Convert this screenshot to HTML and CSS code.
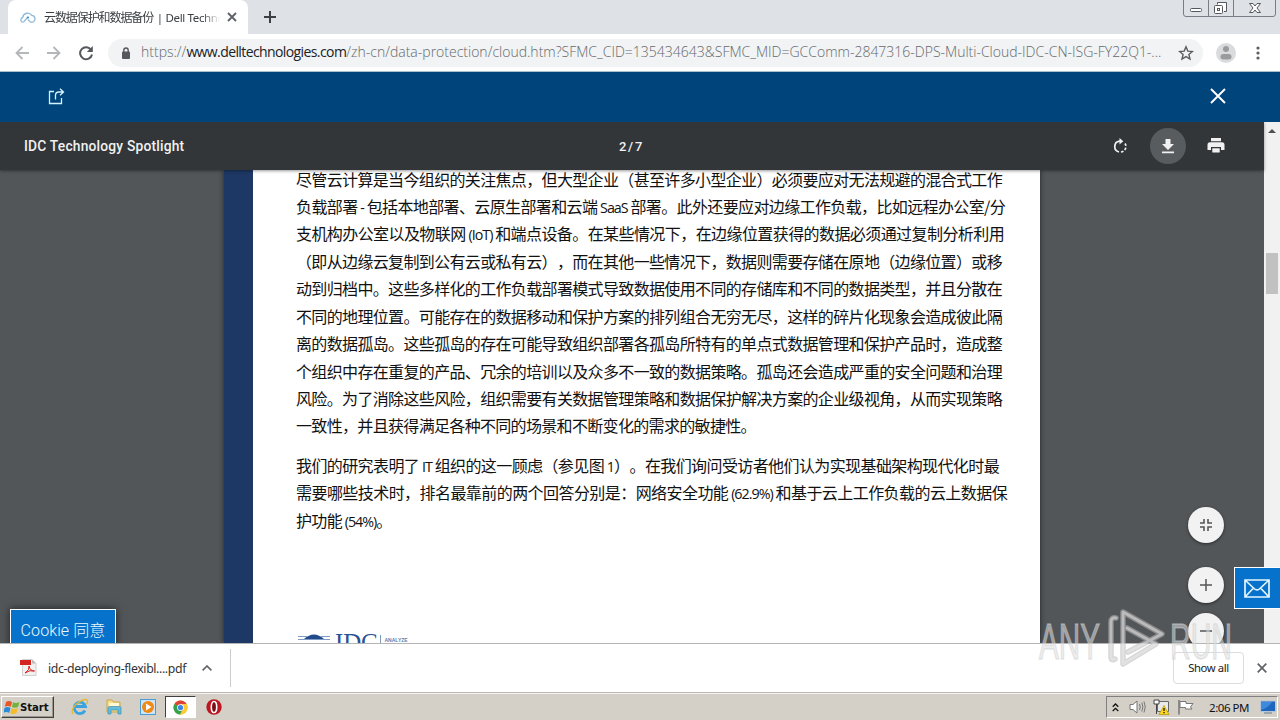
FILE: index.html
```html
<!DOCTYPE html>
<html lang="zh-CN">
<head>
<meta charset="utf-8">
<title>云数据保护和数据备份 | Dell Technologies</title>
<link rel="stylesheet" href="styles.css">
</head>
<body>
<div class="screen">
  <header class="tabs">
    <div class="tab">
      <svg class="fav" width="16" height="13" viewBox="0 0 16 13" fill="none" stroke="#8fb9d9" stroke-width="1.3"><path d="M3.5 11.2H2.8A2.4 2.4 0 0 1 2.7 6.500A5 5 0 0 1 11.800 4.300A3.600 3.600 0 0 1 12.800 11.200H10.500L7.800 8.400"/><path d="M3.500 11.200L7.800 6"/><circle cx="8" cy="6.500" r="1" fill="#2d87c8" stroke="none"/></svg>
      <span class="tab-title"><span class="cn">云数据保护和数据备份</span> | Dell Techno</span>
      <svg class="tab-x" width="10" height="10" viewBox="0 0 10 10" stroke="#5f6368" stroke-width="1.900"><path d="M1 1L9 9M9 1L1 9"/></svg>
    </div>
    <svg class="new-tab" width="12" height="12" viewBox="0 0 12 12" stroke="#3c4043" stroke-width="2"><path d="M6 0V12M0 6H12"/></svg>
    <svg class="win" width="94" height="18" viewBox="0 0 94 18" fill="none" stroke="#7a7d86"><path d="M.5 0V14Q.5 16.500 3 16.500H90Q92.500 16.500 92.500 14V0M25.500 0V16M50.500 0V16"/><g stroke="#55575e"><rect x="7.500" y="8.500" width="11" height="3" rx="1" fill="#fff"/><path d="M34.500 4.500V2.500H43.500V11.500H41" fill="#fff"/><rect x="31.500" y="5.500" width="8" height="8" rx="1" fill="#fff"/><rect x="34.500" y="8.500" width="2" height="2"/><path d="M66.500 3.500H70L72 6L74 3.500H77.500L74 8L77.500 12.500H74L72 10L70 12.500H66.500L70 8Z" fill="#fff"/></g></svg>
  </header>
  <div class="nav">
    <svg width="14" height="14" viewBox="0 0 14 14" fill="none" stroke="#b4b6b9" stroke-width="1.800"><path d="M14 7H1.500M7.500 1L1.500 7L7.500 13"/></svg>
    <svg width="14" height="14" viewBox="0 0 14 14" fill="none" stroke="#b4b6b9" stroke-width="1.800"><path d="M0 7H12.500M6.500 1L12.500 7L6.500 13"/></svg>
    <svg class="reload" width="16" height="16" viewBox="0 0 16 16"><path d="M13.200 5A6 6 0 1 0 14 9.500" fill="none" stroke="#55585c" stroke-width="2"/><path d="M14.800 1V7H8.800Z" fill="#55585c"/></svg>
    <div class="omni">
      <svg width="10" height="12" viewBox="0 0 10 12"><rect x="1" y="4.500" width="8" height="7.500" rx="1" fill="#55585c"/><path d="M2.800 5V3.200A2.200 2.200 0 0 1 7.200 3.200V5" fill="none" stroke="#55585c" stroke-width="1.400"/></svg>
      <span class="url"><span class="u1">https://</span><span class="u2">www.delltechnologies.com</span><span class="u3">/zh-cn/data-protection/cloud.htm?SFMC_CID=135434643&amp;SFMC_MID=GCComm-2847316-DPS-Multi-Cloud-IDC-CN-ISG-FY22Q1-...</span></span>
      <svg width="16" height="16" viewBox="0 0 16 16" fill="none" stroke="#5a5d61" stroke-width="1.400"><path d="M8 1.800L9.800 6.100L14.400 6.500L10.900 9.500L12 14.100L8 11.600L4 14.100L5.100 9.500L1.600 6.500L6.200 6.100Z"/></svg>
    </div>
    <svg class="user" width="20" height="20" viewBox="0 0 20 20"><circle cx="10" cy="10" r="10" fill="#dadbdd"/><circle cx="10" cy="6" r="3" fill="#9a9b9d"/><rect x="4.500" y="11" width="11" height="5.500" rx="3" fill="#9a9b9d"/></svg>
    <svg class="dots" width="4" height="14" viewBox="0 0 4 14" fill="#5a5d61"><circle cx="2" cy="2" r="1.600"/><circle cx="2" cy="7" r="1.600"/><circle cx="2" cy="12" r="1.600"/></svg>
  </div>
  <div class="modal-bar">
    <svg width="17" height="17" viewBox="0 0 17 17" fill="none" stroke="#d5f2fb" stroke-width="1.300"><path d="M6 3.500H1.500V15.500H13.500V10M7.500 11.500V7.500Q7.500 4 11 4H15.500M12 .8L15.500 4L12 7.200"/></svg>
    <svg width="16" height="16" viewBox="0 0 16 16" stroke="#fff" stroke-width="1.900"><path d="M1 1L15 15M15 1L1 15"/></svg>
  </div>
  <main class="viewer">
    <section class="pdf">
      <div class="pdf-bar">
        <span class="doc-title">IDC Technology Spotlight</span>
        <span class="pages">2 / 7</span>
        <div class="pdf-tools">
          <svg width="16" height="16" viewBox="0 0 16 16" fill="none" stroke="#f1f1f1" stroke-width="1.700"><path d="M7 14A5.500 5.500 0 0 1 7.500 3.200H9"/><path d="M9 14A5.500 5.500 0 0 0 13 5.500" stroke-dasharray="2.600 1.700"/><path d="M7.500 0L11.300 3.300L7.500 6.600Z" fill="#f1f1f1" stroke="none"/></svg>
          <span class="dl"><svg width="14" height="16" viewBox="0 0 14 16" fill="#f1f1f1"><path d="M4.500 1H9.500V6H13L7 12L1 6H4.500ZM1 13.500H13V15.200H1Z"/></svg></span>
          <svg width="18" height="16" viewBox="0 0 18 16" fill="#f1f1f1"><path d="M4 0H14V3.300H4ZM3 4.300H15Q17.500 4.300 17.500 7V12H14V9H4V12H.5V7Q.5 4.300 3 4.300ZM5.300 10.200H12.700V14.600H5.300Z"/></svg>
        </div>
      </div>
      <div class="canvas">
        <article class="page">
          <div class="copy">
            <p class="ln">尽管云计算是当今组织的关注焦点，但大型企业（甚至许多小型企业）必须要应对无法规避的混合式工作</p>
            <p class="ln w2">负载部署<span class="lat"> - </span>包括本地部署、云原生部署和云端<span class="lat"> SaaS </span>部署。此外还要应对边缘工作负载，比如远程办公室/分</p>
            <p class="ln w3">支机构办公室以及物联网<span class="lat"> (IoT) </span>和端点设备。在某些情况下，在边缘位置获得的数据必须通过复制分析利用</p>
            <p class="ln">（即从边缘云复制到公有云或私有云），而在其他一些情况下，数据则需要存储在原地（边缘位置）或移</p>
            <p class="ln">动到归档中。这些多样化的工作负载部署模式导致数据使用不同的存储库和不同的数据类型，并且分散在</p>
            <p class="ln">不同的地理位置。可能存在的数据移动和保护方案的排列组合无穷无尽，这样的碎片化现象会造成彼此隔</p>
            <p class="ln">离的数据孤岛。这些孤岛的存在可能导致组织部署各孤岛所特有的单点式数据管理和保护产品时，造成整</p>
            <p class="ln">个组织中存在重复的产品、冗余的培训以及众多不一致的数据策略。孤岛还会造成严重的安全问题和治理</p>
            <p class="ln">风险。为了消除这些风险，组织需要有关数据管理策略和数据保护解决方案的企业级视角，从而实现策略</p>
            <p class="ln end">一致性，并且获得满足各种不同的场景和不断变化的需求的敏捷性。</p>
            <p class="ln gap w4">我们的研究表明了<span class="lat"> IT </span>组织的这一顾虑（参见图<span class="lat"> 1</span>）。在我们询问受访者他们认为实现基础架构现代化时最</p>
            <p class="ln w5">需要哪些技术时，排名最靠前的两个回答分别是：网络安全功能<span class="lat"> (62.9%) </span>和基于云上工作负载的云上数据保</p>
            <p class="ln end">护功能<span class="lat"> (54%)</span>。</p>
          </div>
          <div class="idc">
            <svg width="32" height="12" viewBox="0 0 32 12" stroke="#7f9cc6"><path d="M6 5Q16-4 26 5Z" fill="#234b8c" stroke="none"/><path d="M0 2.500H10M22 2.500H32M0 5.500H32" fill="none" stroke-width="1"/></svg>
            <span class="idc-name">IDC</span><span class="idc-tag">ANALYZE</span>
          </div>
        </article>
        <span class="cookie">Cookie 同意</span>
        <div class="zooms">
          <span class="fab fit"><svg width="12" height="12" viewBox="0 0 12 12" fill="none" stroke="#555" stroke-width="1.600"><path d="M0 4H4V0M8 0V4H12M0 8H4V12M12 8H8V12"/></svg></span>
          <span class="fab plus"><svg width="12" height="12" viewBox="0 0 12 12" stroke="#555" stroke-width="1.500"><path d="M6 0V12M0 6H12"/></svg></span>
          <span class="fab"><svg width="12" height="12" viewBox="0 0 12 12" stroke="#555" stroke-width="1.500"><path d="M0 6H12"/></svg></span>
        </div>
      </div>
    </section>
    <aside class="scroll"><i class="up"></i><i class="thumb"></i></aside>
    <span class="mail"><svg width="26" height="19" viewBox="0 0 26 19" fill="none" stroke="#e3f6ff" stroke-width="1.700"><path d="M1 1H25V18H1ZM1 1L10 9.500Q13 12.500 16 9.500L25 1M1 18L9.500 9M25 18L16.500 9"/></svg></span>
  </main>
  <div class="downloads">
    <svg width="17" height="17" viewBox="0 0 17 17"><path d="M2.500 .5H12L16 4.500V16.500H2.500Z" fill="#f1f1f1" stroke="#d0d0d0"/><path d="M12 .5V4.500H16Z" fill="#b9b9b9"/><rect y="1" width="11" height="5" fill="#d5231f"/><path d="M5 14Q10 11 9 7Q10 12 14.500 12Q10 10.500 5 14Z" fill="none" stroke="#d5231f"/></svg>
    <span class="fname">idc-deploying-flexibl....pdf</span>
    <svg class="chev" width="10" height="6" viewBox="0 0 10 6" fill="none" stroke="#5f6368" stroke-width="1.600"><path d="M.6 5.400L5 1L9.400 5.400"/></svg>
    <i class="sep"></i>
    <span class="show">Show all</span>
    <svg width="10" height="10" viewBox="0 0 10 10" stroke="#5f6368" stroke-width="1.700"><path d="M.7 .7L9.300 9.300M9.300 .7L.7 9.300"/></svg>
  </div>
  <footer class="taskbar">
    <span class="start"><svg width="16" height="15" viewBox="0 0 16 15"><path d="M2 2Q5 0 8 2L6.800 6.800Q4 5 .8 6.800Z" fill="#e8562a"/><path d="M9 2.300Q12 4 15.500 2L14 7Q11 8.500 7.800 7Z" fill="#72b43b"/><path d="M.5 8Q3.500 6.200 6.500 8L5.200 13Q2.500 11 -.8 13Z" fill="#2b8bd8"/><path d="M7.500 8.300Q10.500 10 13.800 8L12.500 13Q9.500 15 6.300 13.200Z" fill="#f5bb28"/></svg>Start</span>
    <div class="quick">
      <svg width="18" height="18" viewBox="0 0 18 18" fill="none"><path d="M14 12.500A5.700 5.700 0 1 1 14.500 8.500H4" stroke="#38a3df" stroke-width="2.800"/><path d="M2 16Q-1 12 6 5.500Q14-.5 16.500 2.500Q17 4 15.500 6" stroke="#e3b839" stroke-width="1.300"/></svg>
      <svg width="18" height="18" viewBox="0 0 18 18"><path d="M2 2H7L8.500 4H15V14H2Z" fill="#f6dc86" stroke="#c9a743"/><path d="M4 5H14V9H4Z" fill="#fff8d7"/><path d="M3 16V10Q3 8.500 4.500 8.500H14.500Q16 8.500 16 10V16H13V12H6V16Z" fill="#65bcd9" stroke="#3d8fb6" stroke-width=".7"/></svg>
      <svg width="18" height="18" viewBox="0 0 18 18"><rect x="1.500" y="1.500" width="15" height="15" fill="#cce6f7" stroke="#4c9bd4"/><circle cx="9" cy="9" r="6" fill="#f08a14"/><path d="M7 5.500L12.500 9L7 12.500Z" fill="#fff"/></svg>
      <span class="active"><svg width="15" height="15" viewBox="0 0 16 16"><circle cx="8" cy="8" r="7.500" fill="#e1a927"/><path d="M8 8L1.500 4.300A7.500 7.500 0 0 1 14.500 4.300Z" fill="#dd4439"/><path d="M8 8L1.500 4.300A7.500 7.500 0 0 0 7.500 15.500L10 10Z" fill="#31a350"/><path d="M8 4.300H14.600A7.500 7.500 0 0 1 7.500 15.500L11 10Z" fill="#fbcc34"/><circle cx="8" cy="8" r="3.600" fill="#fff"/><circle cx="8" cy="8" r="2.800" fill="#3f82e8"/></svg></span>
      <svg width="16" height="16" viewBox="0 0 16 16"><circle cx="8" cy="8" r="7.700" fill="#bd1622"/><ellipse cx="8" cy="8" rx="2.700" ry="5.500" fill="#7d0b13" stroke="#fff" stroke-width="1.600"/></svg>
    </div>
    <div class="tray">
      <svg width="7" height="9" viewBox="0 0 7 9" fill="none" stroke="#111" stroke-width="1.300"><path d="M.7 3.700L3.500 1L6.300 3.700M.7 8L3.500 5.300L6.300 8"/></svg>
      <svg class="t1" width="17" height="16" viewBox="0 0 17 16" fill="none" stroke="#777"><path d="M1 5.500H4L8 2V14L4 10.500H1Z" fill="#fff"/><path d="M10.500 5Q12 8 10.500 11M12.800 3.500Q15 8 12.800 12.500M15 2.500Q17.500 8 15 13.500"/></svg>
      <svg class="t2" width="17" height="16" viewBox="0 0 17 16"><path d="M4.500 2.500H15.500V12.500H4.500Z" fill="#e9e9e9" stroke="#666"/><path d="M1 1V5H6V1ZM3.500 5V15" fill="#fff" stroke="#444"/><path d="M11 6.500L16 15.500H6Z" fill="#ffd91c" stroke="#b59500" stroke-width=".7"/><path d="M11 9V12M11 13V14.200" stroke="#111" stroke-width="1.300"/></svg>
      <svg class="t3" width="17" height="16" viewBox="0 0 17 16"><path d="M2 1V15.500" stroke="#666" stroke-width="1.300"/><path d="M3 2.500H9V4.500H16L13.500 8L15 10H8.500V8.500H3Z" fill="#fff" stroke="#777"/></svg>
      <span class="time">2:06 PM</span>
      <svg width="16" height="14" viewBox="0 0 16 14"><rect x=".5" y="1" width="15" height="10.500" fill="#1e66bd" stroke="#b8c6d6"/><path d="M1 10Q8 8 12 2H1Z" fill="#3c8add"/><path d="M4 13H12" stroke="#8897a6" stroke-width="1.500"/></svg>
    </div>
  </footer>
  <svg class="mark" width="200" height="66" viewBox="0 0 200 66">
    <g fill="#dedede" fill-opacity=".55" stroke="#cfcfcf" stroke-opacity=".5" stroke-width="1.500" font-family="Liberation Sans, sans-serif" font-size="50"><text x="2" y="51" textLength="61" lengthAdjust="spacingAndGlyphs">ANY</text><text x="133" y="51" textLength="62" lengthAdjust="spacingAndGlyphs">RUN</text></g>
    <g fill="none" stroke-linejoin="round" stroke-linecap="round"><path d="M79 10Q74 9 74 14V49Q74 53 78 51M90 20L119 36L86 56V4L125 26L91 44" stroke="#b4b4b4" stroke-opacity=".55" stroke-width="5.500"/><path d="M79 10Q74 9 74 14V49Q74 53 78 51M90 20L119 36L86 56V4L125 26L91 44" stroke="#eee" stroke-opacity=".5" stroke-width="3"/></g>
  </svg>
</div>
</body>
</html>
```
FILE: styles.css
```css
* { box-sizing: border-box; }
body { margin: 0; font-family: "Noto Sans", "Noto Sans CJK SC", sans-serif; }
svg { display: block; flex: none; }
.screen { position: relative; width: 1280px; height: 720px; overflow: hidden; display: flex; flex-direction: column; }
.tabs { height: 34px; background: #dee1e6; display: flex; align-items: center; padding-left: 8px; flex: none; }
.tab { width: 240px; height: 34px; background: #fff; border-radius: 8px 8px 0 0; display: flex; align-items: center; padding: 0 11px 0 12px; }
.tab-title { margin-left: 8px; width: 176px; margin-right: 7px; font-size: 11.5px; letter-spacing: -0.35px; color: #3c4043; white-space: nowrap; mask-image: linear-gradient(90deg, #000 90%, transparent); }
.cn { font-size: 12px; letter-spacing: -1.08px; margin-right: 1px; }
.new-tab { margin-left: 16px; }
.win { margin-left: auto; margin-right: 3px; align-self: flex-start; }
.nav { height: 38px; flex: none; display: flex; align-items: center; padding-left: 15px; border-bottom: 1px solid #a9c0cf; background: #fff; }
.nav > svg + svg { margin-left: 18px; }
.nav > svg.reload { margin-left: 17px; }
.omni { margin-left: 14px; width: 1095px; height: 28px; border-radius: 14px; background: #f1f3f4; display: flex; align-items: center; padding-left: 13px; }
.url { margin-left: 10px; width: 1024px; margin-right: 13px; font-size: 14px; line-height: 20px; padding-bottom: 1px; white-space: nowrap; font-family: "Open Sans", "Noto Sans", sans-serif; font-weight: 300; display: flex; color: #66696d; }
.u2 { color: #202124; font-weight: 400; letter-spacing: -.6px; }
.user { margin-left: 13px; }
.nav > svg.dots { margin-left: 20px; }
.modal-bar { height: 50px; flex: none; background: #00447c; display: flex; align-items: center; justify-content: space-between; padding: 0 54px 2px 48px; }
.viewer { position: relative; height: 521px; flex: none; display: flex; overflow: hidden; }
.pdf { width: 1264px; display: flex; flex-direction: column; }
.pdf-bar { position: relative; z-index: 2; height: 48px; flex: none; background: #323639; color: #f1f1f1; display: grid; grid-template-columns: 619px 1fr auto; align-items: center; padding: 0 39px 0 24px; font: 500 13.8px Roboto, sans-serif; box-shadow: 0 1px 3px rgba(0,0,0,.4); }
.doc-title { letter-spacing: .2px; }
.pages { margin-left: -24px; font-size: 13px; word-spacing: -1.5px; }
.pdf-tools { display: flex; align-items: center; gap: 21px; }
.pdf-tools > svg:first-child { margin-right: 1px; }
.dl { width: 36px; height: 36px; border-radius: 50%; background: #595c5f; display: grid; place-items: center; }
.canvas { position: relative; flex: 1; background: #525659; padding-left: 224px; overflow: hidden; }
.page { width: 816px; height: 473px; background: #fff; border-left: 29px solid #1d3864; box-shadow: 0 0 5px rgba(0,0,0,.6); overflow: hidden; padding-left: 43px; }
.copy { margin-top: -4.5px; }
.ln { margin: 0; width: 706px; height: 27.45px; line-height: 27.45px; font-size: 16px; letter-spacing: -.67px; font-family: "Noto Sans CJK SC", sans-serif; color: #111; white-space: nowrap; text-align: justify; text-align-last: justify; text-spacing-trim: space-all; }
.ln.w2 { width: 709px; }
.ln.w3 { width: 708px; }
.ln.w4 { width: 703px; }
.ln.w5 { width: 711px; }
.ln.end { text-align-last: left; }
.ln.gap { margin-top: 12px; }
.lat { font-family: "Open Sans", sans-serif; font-size: 14.3px; letter-spacing: -1px; white-space: pre; }
.idc { display: flex; align-items: flex-start; margin: 99.500px 0 0 2px; color: #2a5191; }
.idc-name { font: 25px/24px "Liberation Serif", serif; margin: -3px 0 0 5px; letter-spacing: -.2px; }
.idc-tag { border-left: 1px solid #7f9ac0; margin: 1px 0 0 3px; padding-left: 3px; font: 700 5px/10px "Liberation Sans", sans-serif; color: #5b7fb4; height: 20px; }
.cookie { position: absolute; left: 10px; top: 439px; width: 106px; height: 42px; border: 1px solid #fff; background: #0672cb; color: #e8faff; font: 300 16px/42px Roboto, "Noto Sans CJK SC", sans-serif; text-align: center; box-shadow: 0 0 8px rgba(0,0,0,.6); letter-spacing: .1px; }
.zooms { position: absolute; left: 1188px; top: 337px; display: flex; flex-direction: column; }
.fab { width: 36px; height: 36px; border-radius: 50%; background: #f2f2f2; box-shadow: 0 1px 3px rgba(0,0,0,.5); display: grid; place-items: center; }
.fit { margin-bottom: 24px; }
.plus { margin-bottom: 10px; }
.scroll { width: 16px; background: #f1f1f1; display: flex; flex-direction: column; align-items: center; }
.up { margin-top: 7px; border: 4px solid transparent; border-top: 0; border-bottom: 4px solid #505050; }
.thumb { margin-top: 120px; width: 12px; height: 41px; background: #c1c1c1; }
.mail { position: absolute; right: -1px; top: 445px; width: 47px; height: 42px; border: 1px solid #fff; background: #0672cb; display: flex; align-items: center; padding-left: 9px; }
.downloads { height: 50px; flex: none; background: #fff; border-top: 1px solid #b5b5b5; display: flex; align-items: center; padding: 0 13px 2px 20px; color: #333; }
.fname { margin-left: 11px; width: 138px; font-size: 12.3px; letter-spacing: -.38px; white-space: nowrap; padding-top: 2px; }
.chev { margin-left: 16px; }
.sep { width: 1px; height: 38px; background: #ccc; margin-left: 18px; }
.show { margin-left: auto; margin-right: 13px; width: 71px; height: 32px; border: 1px solid #dadce0; border-radius: 4px; font-size: 11.3px; line-height: 29px; text-align: center; letter-spacing: -.4px; color: #222; }
.taskbar { flex: none; height: 27px; background: #d4d0c8; border-top: 1px solid #f5f3ef; box-shadow: 0 -1px #bdb9b1; display: flex; align-items: center; }
.start { width: 53px; height: 22px; margin-left: 1px; border: 1px solid; border-color: #fff #404040 #404040 #fff; box-shadow: inset -1px -1px #9b978f; display: flex; align-items: center; padding-left: 2px; font: 700 11.3px "DejaVu Sans Condensed", "DejaVu Sans", sans-serif; letter-spacing: -.1px; color: #111; }
.quick { display: flex; align-items: center; margin-left: 17px; gap: 16px; }
.active { width: 31px; height: 22px; background: #fff; border: 1px solid; border-color: #404040 #fff #fff #404040; display: grid; place-items: center; margin: 0 -6px 0 -8px; }
.tray { margin-left: auto; width: 172px; height: 22px; margin-right: 2px; border: 1px solid; border-color: #808080 #fff #fff #808080; display: flex; align-items: center; padding-left: 5px; }
.t1 { margin-left: 10px; }
.t2, .t3 { margin-left: 7px; }
.time { width: 42px; margin: 0 9px 0 15px; font-size: 11.5px; letter-spacing: -.45px; color: #111; white-space: nowrap; }
.mark { position: absolute; left: 1037px; top: 608px; }
```
